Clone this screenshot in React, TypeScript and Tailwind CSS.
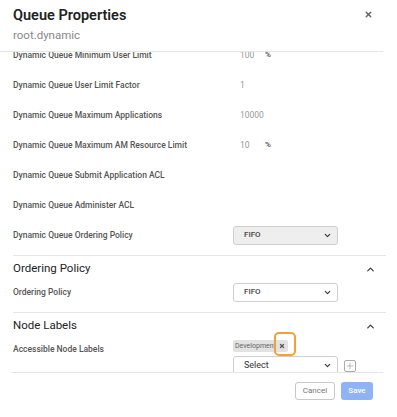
import { X, ChevronUp, ChevronDown, Plus } from 'lucide-react';

type Row = { label: string; value?: string; unit?: string; select?: string };

const dynamicRows: Row[] = [
  { label: 'Dynamic Queue Minimum User Limit', value: '100', unit: '%' },
  { label: 'Dynamic Queue User Limit Factor', value: '1' },
  { label: 'Dynamic Queue Maximum Applications', value: '10000' },
  { label: 'Dynamic Queue Maximum AM Resource Limit', value: '10', unit: '%' },
  { label: 'Dynamic Queue Submit Application ACL' },
  { label: 'Dynamic Queue Administer ACL' },
];

function SelectBox({ text, muted }: { text: string; muted?: boolean }) {
  return (
    <div
      className={`flex h-[19px] w-[105px] items-center justify-between rounded-[3px] border border-[#cfcfcf] pl-[10px] pr-[5px] ${
        muted ? 'bg-[#eeeeee]' : 'bg-white'
      }`}
    >
      <span className="text-[8px] font-medium text-[#444]">{text}</span>
      <ChevronDown className="h-[9px] w-[9px] text-[#333]" strokeWidth={3} />
    </div>
  );
}

function SectionHeader({ title }: { title: string }) {
  return (
    <div className="flex h-[26px] items-center justify-between pr-[10px]">
      <span className="text-[11.5px] text-[#222]">{title}</span>
      <ChevronUp className="h-[11px] w-[11px] text-[#333]" strokeWidth={2.5} />
    </div>
  );
}

export default function App() {
  return (
    <div className="relative h-[417px] w-[397px] overflow-hidden bg-white font-['Roboto',sans-serif]">
      {/* header */}
      <div className="relative h-[51px] pl-[13px] pt-[5px]">
        <div className="text-[14.5px] font-semibold leading-[21px] text-[#222]">Queue Properties</div>
        <div className="mt-[1px] text-[11.5px] leading-[16px] text-[#888]">root.dynamic</div>
        <X className="absolute right-[24px] top-[10px] h-[9px] w-[9px] text-[#666]" strokeWidth={4} />
      </div>

      <div className="mr-[14px] border-t border-[#e6e6e6]" />

      {/* scrolling body */}
      <div className="h-[320px] overflow-hidden">
        <div className="-mt-[12px] pl-[13px]">
          {dynamicRows.map((row) => (
            <div key={row.label} className="flex h-[30px] items-center">
              <span className="w-[220px] text-[8.5px] font-medium text-[#555]">{row.label}</span>
              {row.value && (
                <div className="flex items-center text-[8.5px] text-[#999]">
                  <span className="w-[32px] pl-[7px]">{row.value}</span>
                  {row.unit && <span className="text-[8px] font-semibold text-[#555]">{row.unit}</span>}
                </div>
              )}
            </div>
          ))}
          <div className="flex h-[30px] items-center">
            <span className="w-[220px] text-[8.5px] font-medium text-[#555]">Dynamic Queue Ordering Policy</span>
            <SelectBox text="FIFO" muted />
          </div>

          <div className="mr-[11px] mt-[5px] border-t border-[#e6e6e6]" />
          <div className="mr-[11px]">
            <SectionHeader title="Ordering Policy" />
            <div className="flex h-[20px] items-center">
              <span className="w-[220px] text-[8.5px] font-medium text-[#555]">Ordering Policy</span>
              <SelectBox text="FIFO" />
            </div>
          </div>

          <div className="mr-[11px] mt-[10px] border-t border-[#e6e6e6]" />
          <div className="mr-[11px]">
            <SectionHeader title="Node Labels" />
            <div className="flex">
              <span className="mt-[4px] w-[220px] text-[8.5px] font-medium text-[#555]">Accessible Node Labels</span>
              <div className="flex flex-col">
                <div className="relative mt-[1px] flex h-[12px] w-fit items-center gap-[3px] rounded-[2px] bg-[#e2e2e2] pl-[2px] pr-[3px]">
                  <span className="text-[7px] text-[#666]">Development</span>
                  <X className="h-[6px] w-[6px] text-[#555]" strokeWidth={5} />
                  <div className="absolute right-[-8px] top-[-8px] h-[24px] w-[22px] rounded-[5px] border-2 border-[#f2a03a]" />
                </div>
                <div className="mt-[4px] flex items-center gap-[6px]">
                  <div className="flex h-[19px] w-[105px] items-center justify-between rounded-[3px] border border-[#cfcfcf] bg-white pl-[10px] pr-[5px]">
                    <span className="text-[9px] text-[#333]">Select</span>
                    <ChevronDown className="h-[9px] w-[9px] text-[#333]" strokeWidth={3} />
                  </div>
                  <div className="flex h-[12px] w-[12px] items-center justify-center rounded-[2px] border border-[#aaa]">
                    <Plus className="h-[10px] w-[10px] text-[#999]" strokeWidth={1.5} />
                  </div>
                </div>
              </div>
            </div>
          </div>
        </div>
      </div>

      {/* footer */}
      <div className="ml-[11px] mr-[14px] border-t border-[#e6e6e6]" />
      <div className="flex justify-end gap-[6px] pr-[24px] pt-[9px]">
        <button className="h-[18px] w-[40px] rounded-[3px] border border-[#c8c8c8] bg-white text-[8px] text-[#777]">
          Cancel
        </button>
        <button className="h-[18px] w-[32px] rounded-[3px] bg-[#8fb3f5] text-[8px] font-medium text-white">
          Save
        </button>
      </div>
    </div>
  );
}
